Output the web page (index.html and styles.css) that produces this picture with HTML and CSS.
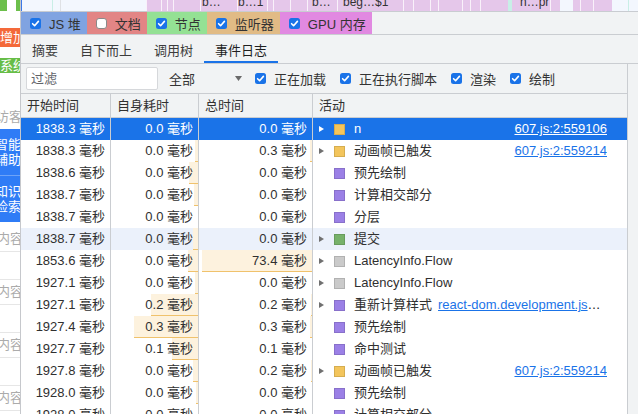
FILE: index.html
```html
<!DOCTYPE html>
<html lang="zh-CN">
<head>
<meta charset="utf-8">
<title>事件日志</title>
<link rel="stylesheet" href="styles.css">
</head>
<body>
<div class="app">
  <aside class="page-strip">
    <div class="ps-top"><span class="g1"></span><span class="w"></span><span class="g2"></span></div>
    <div class="ps-tag orange">增加</div>
    <div class="ps-tag green">系统</div>
    <div class="ps-visitor">访客</div>
    <div class="ps-blue">
      <div class="ps-blue-item first">智能<br>辅助</div>
      <div class="ps-blue-item">知识<br>检索</div>
    </div>
    <div class="ps-card first">内容</div>
    <div class="ps-card">内容</div>
    <div class="ps-card">内容</div>
    <div class="ps-card">内容</div>
  </aside>

  <main class="devtools">
    <div class="flame">
      <div class="fl-line sel" style="left:0"></div>
      <div class="fl-line cyan" style="left:31px"></div>
      <div class="fl-line gray" style="left:39px"></div>
      <div class="fl-block purple" style="left:125px;width:466px"></div>
      <div class="fl-line white" style="left:125px"></div>
      <div class="fl-line white" style="left:140px"></div>
      <div class="fl-line white" style="left:146px"></div>
      <div class="fl-line white" style="left:152px"></div>
      <div class="fl-line white" style="left:179px"></div>
      <div class="fl-line white" style="left:216px"></div>
      <div class="fl-line white" style="left:246px"></div>
      <div class="fl-line white" style="left:252px"></div>
      <div class="fl-line white" style="left:269px"></div>
      <div class="fl-line white" style="left:286px"></div>
      <div class="fl-line white" style="left:316px"></div>
      <div class="fl-line white" style="left:382px"></div>
      <div class="fl-line white" style="left:392px"></div>
      <div class="fl-line white" style="left:409px"></div>
      <div class="fl-line white" style="left:417px"></div>
      <div class="fl-line white" style="left:441px"></div>
      <div class="fl-line white" style="left:449px"></div>
      <div class="fl-line white" style="left:459px"></div>
      <div class="fl-block cyan" style="left:487px;width:4px"></div>
      <div class="fl-line white" style="left:529px"></div>
      <div class="fl-block pale" style="left:539px;width:13px"></div>
      <div class="fl-line white" style="left:559px"></div>
      <div class="fl-line white" style="left:572px"></div>
      <div class="fl-line cyan" style="left:607px"></div>
      <span class="fl-label" style="left:181px">b…</span>
      <span class="fl-label" style="left:217px">b…1</span>
      <span class="fl-label" style="left:291px">b…</span>
      <span class="fl-label" style="left:322px">beg…$1</span>
      <span class="fl-label" style="left:499px">n…pr</span>
    </div>

    <div class="legend">
      <label class="lg js"><svg class="cb" viewBox="0 0 11 11"><rect width="11" height="11" rx="2.5" fill="#1a73e8"/><path d="M2.6 5.7 L4.6 7.7 L8.4 3.4" stroke="#fff" stroke-width="1.6" fill="none" stroke-linecap="round" stroke-linejoin="round"/></svg>JS 堆</label>
      <label class="lg doc"><svg class="cb" viewBox="0 0 11 11"><rect x="0.5" y="0.5" width="10" height="10" rx="2.5" fill="#fff" stroke="#8a8a8a"/></svg>文档</label>
      <label class="lg node"><svg class="cb" viewBox="0 0 11 11"><rect width="11" height="11" rx="2.5" fill="#1a73e8"/><path d="M2.6 5.7 L4.6 7.7 L8.4 3.4" stroke="#fff" stroke-width="1.6" fill="none" stroke-linecap="round" stroke-linejoin="round"/></svg>节点</label>
      <label class="lg listen"><svg class="cb" viewBox="0 0 11 11"><rect width="11" height="11" rx="2.5" fill="#1a73e8"/><path d="M2.6 5.7 L4.6 7.7 L8.4 3.4" stroke="#fff" stroke-width="1.6" fill="none" stroke-linecap="round" stroke-linejoin="round"/></svg>监听器</label>
      <label class="lg gpu"><svg class="cb" viewBox="0 0 11 11"><rect width="11" height="11" rx="2.5" fill="#1a73e8"/><path d="M2.6 5.7 L4.6 7.7 L8.4 3.4" stroke="#fff" stroke-width="1.6" fill="none" stroke-linecap="round" stroke-linejoin="round"/></svg>GPU 内存</label>
    </div>

    <nav class="tabs">
      <div class="tab">摘要</div>
      <div class="tab">自下而上</div>
      <div class="tab">调用树</div>
      <div class="tab active">事件日志</div>
    </nav>

    <div class="content">
      <div class="main">
        <div class="filter">
          <input class="filter-input" type="text" placeholder="过滤">
          <div class="select"><span>全部</span><svg class="arrow" viewBox="0 0 7 5"><path d="M0 0 H7 L3.5 5 Z" fill="#6a6a6a"/></svg></div>
          <label class="fcb"><svg class="cb" viewBox="0 0 11 11"><rect width="11" height="11" rx="2.5" fill="#1a73e8"/><path d="M2.6 5.7 L4.6 7.7 L8.4 3.4" stroke="#fff" stroke-width="1.6" fill="none" stroke-linecap="round" stroke-linejoin="round"/></svg>正在加载</label>
          <label class="fcb"><svg class="cb" viewBox="0 0 11 11"><rect width="11" height="11" rx="2.5" fill="#1a73e8"/><path d="M2.6 5.7 L4.6 7.7 L8.4 3.4" stroke="#fff" stroke-width="1.6" fill="none" stroke-linecap="round" stroke-linejoin="round"/></svg>正在执行脚本</label>
          <label class="fcb"><svg class="cb" viewBox="0 0 11 11"><rect width="11" height="11" rx="2.5" fill="#1a73e8"/><path d="M2.6 5.7 L4.6 7.7 L8.4 3.4" stroke="#fff" stroke-width="1.6" fill="none" stroke-linecap="round" stroke-linejoin="round"/></svg>渲染</label>
          <label class="fcb"><svg class="cb" viewBox="0 0 11 11"><rect width="11" height="11" rx="2.5" fill="#1a73e8"/><path d="M2.6 5.7 L4.6 7.7 L8.4 3.4" stroke="#fff" stroke-width="1.6" fill="none" stroke-linecap="round" stroke-linejoin="round"/></svg>绘制</label>
        </div>

        <div class="table">
          <div class="thead">
            <div class="hcell">开始时间</div>
            <div class="hcell">自身耗时</div>
            <div class="hcell">总时间</div>
            <div class="hcell last">活动</div>
          </div>

          <div class="row sel">
            <div class="cell num"><span>1838.3 毫秒</span></div>
            <div class="cell num"><span>0.0 毫秒</span></div>
            <div class="cell num"><span>0.0 毫秒</span></div>
            <div class="cell act"><i class="tri"></i><i class="sq yellow"></i><span class="name">n</span><span class="src"><a>607.js:2:559106</a></span></div>
          </div>
          <div class="row">
            <div class="cell num"><span>1838.3 毫秒</span></div>
            <div class="cell num"><b class="bar" style="width:3px"></b><span>0.0 毫秒</span></div>
            <div class="cell num"><b class="bar" style="width:2px"></b><span>0.3 毫秒</span></div>
            <div class="cell act"><i class="tri"></i><i class="sq yellow"></i><span class="name">动画帧已触发</span><span class="src"><a>607.js:2:559214</a></span></div>
          </div>
          <div class="row">
            <div class="cell num"><span>1838.6 毫秒</span></div>
            <div class="cell num"><b class="bar" style="width:9px"></b><span>0.0 毫秒</span></div>
            <div class="cell num"><span>0.0 毫秒</span></div>
            <div class="cell act"><i class="tri none"></i><i class="sq purple"></i><span class="name">预先绘制</span></div>
          </div>
          <div class="row">
            <div class="cell num"><span>1838.7 毫秒</span></div>
            <div class="cell num"><b class="bar" style="width:4px"></b><span>0.0 毫秒</span></div>
            <div class="cell num"><span>0.0 毫秒</span></div>
            <div class="cell act"><i class="tri none"></i><i class="sq purple"></i><span class="name">计算相交部分</span></div>
          </div>
          <div class="row">
            <div class="cell num"><span>1838.7 毫秒</span></div>
            <div class="cell num"><span>0.0 毫秒</span></div>
            <div class="cell num"><span>0.0 毫秒</span></div>
            <div class="cell act"><i class="tri none"></i><i class="sq purple"></i><span class="name">分层</span></div>
          </div>
          <div class="row hover">
            <div class="cell num"><span>1838.7 毫秒</span></div>
            <div class="cell num"><b class="bar" style="width:5px"></b><span>0.0 毫秒</span></div>
            <div class="cell num"><span>0.0 毫秒</span></div>
            <div class="cell act"><i class="tri"></i><i class="sq green"></i><span class="name">提交</span></div>
          </div>
          <div class="row">
            <div class="cell num"><span>1853.6 毫秒</span></div>
            <div class="cell num"><b class="bar" style="width:10px"></b><span>0.0 毫秒</span></div>
            <div class="cell num"><b class="bar" style="width:110px"></b><span>73.4 毫秒</span></div>
            <div class="cell act"><i class="tri"></i><i class="sq gray"></i><span class="name">LatencyInfo.Flow</span></div>
          </div>
          <div class="row">
            <div class="cell num"><span>1927.1 毫秒</span></div>
            <div class="cell num"><b class="bar" style="width:3px"></b><span>0.0 毫秒</span></div>
            <div class="cell num"><span>0.0 毫秒</span></div>
            <div class="cell act"><i class="tri"></i><i class="sq gray"></i><span class="name">LatencyInfo.Flow</span></div>
          </div>
          <div class="row">
            <div class="cell num"><span>1927.1 毫秒</span></div>
            <div class="cell num"><b class="bar" style="width:47px"></b><span>0.2 毫秒</span></div>
            <div class="cell num"><b class="bar" style="width:1px"></b><span>0.2 毫秒</span></div>
            <div class="cell act"><i class="tri"></i><i class="sq purple"></i><span class="name">重新计算样式</span><span class="src long"><a>react-dom.development.js</a>…</span></div>
          </div>
          <div class="row">
            <div class="cell num"><span>1927.4 毫秒</span></div>
            <div class="cell num"><b class="bar" style="width:64px"></b><span>0.3 毫秒</span></div>
            <div class="cell num"><b class="bar" style="width:2px"></b><span>0.3 毫秒</span></div>
            <div class="cell act"><i class="tri none"></i><i class="sq purple"></i><span class="name">预先绘制</span></div>
          </div>
          <div class="row">
            <div class="cell num"><span>1927.7 毫秒</span></div>
            <div class="cell num"><b class="bar" style="width:26px"></b><span>0.1 毫秒</span></div>
            <div class="cell num"><span>0.1 毫秒</span></div>
            <div class="cell act"><i class="tri none"></i><i class="sq purple"></i><span class="name">命中测试</span></div>
          </div>
          <div class="row">
            <div class="cell num"><span>1927.8 毫秒</span></div>
            <div class="cell num"><b class="bar" style="width:5px"></b><span>0.0 毫秒</span></div>
            <div class="cell num"><b class="bar" style="width:1px"></b><span>0.2 毫秒</span></div>
            <div class="cell act"><i class="tri"></i><i class="sq yellow"></i><span class="name">动画帧已触发</span><span class="src"><a>607.js:2:559214</a></span></div>
          </div>
          <div class="row">
            <div class="cell num"><span>1928.0 毫秒</span></div>
            <div class="cell num"><b class="bar" style="width:2px"></b><span>0.0 毫秒</span></div>
            <div class="cell num"><span>0.0 毫秒</span></div>
            <div class="cell act"><i class="tri none"></i><i class="sq purple"></i><span class="name">预先绘制</span></div>
          </div>
          <div class="row">
            <div class="cell num"><span>1928.0 毫秒</span></div>
            <div class="cell num"><span>0.0 毫秒</span></div>
            <div class="cell num"><span>0.0 毫秒</span></div>
            <div class="cell act"><i class="tri none"></i><i class="sq purple"></i><span class="name">计算相交部分</span></div>
          </div>
        </div>
      </div>
      <div class="gutter"></div>
    </div>
  </main>
</div>
</body>
</html>
```

FILE: styles.css
```css
* { box-sizing: border-box; }
html, body { margin: 0; padding: 0; }
body {
  width: 638px;
  height: 414px;
  overflow: hidden;
  background: #fff;
  color: #303030;
  font-family: "Liberation Sans", "Noto Sans CJK SC", sans-serif;
  font-size: 13px;
}
.app { display: flex; height: 414px; }

/* ---------- underlying page strip ---------- */
.page-strip {
  width: 21px;
  flex: none;
  border-right: 1px solid #c6c8cc;
  overflow: hidden;
  white-space: nowrap;
  display: flex;
  flex-direction: column;
  background: #fff;
  line-height: 14px;
}
.ps-top { height: 11px; display: flex; flex: none; }
.ps-top .g1 { width: 7px; background: #6cbf4b; }
.ps-top .w { width: 9px; }
.ps-top .g2 { width: 4px; background: #6cbf4b; }
.ps-tag { color: #fff; flex: none; }
.ps-tag.orange { margin-top: 17px; height: 19px; line-height: 19px; background: #f4693a; }
.ps-tag.green { margin-top: 11px; height: 15px; line-height: 15px; background: #67bd47; }
.ps-visitor { margin-top: 35px; height: 18px; line-height: 18px; color: #ababab; margin-left: -4px; flex: none; }
.ps-blue { margin-top: 3px; height: 93px; background: #2f7cf6; color: #fff; flex: none; display: flex; flex-direction: column; }
.ps-blue-item { flex: 1; display: flex; align-items: center; margin-left: -5px; line-height: 15px; }
.ps-blue-item.first { border-bottom: 1px solid #6da3f8; }
.ps-card {
  flex: none;
  margin-top: 27px;
  height: 26px;
  line-height: 24px;
  color: #ababab;
  margin-left: -3px;
  border-top: 1px solid #e6e6e6;
  border-bottom: 1px solid #e6e6e6;
}
.ps-card.first { margin-top: 4px; border-top-color: transparent; }

/* ---------- devtools panel ---------- */
.devtools {
  flex: 1;
  min-width: 0;
  display: flex;
  flex-direction: column;
  background: #f1f3f4;
}

.flame {
  position: relative;
  flex: none;
  height: 12px;
  background: #f3f7fe;
  border-bottom: 1px solid #c9ccd1;
  overflow: hidden;
}
.fl-line { position: absolute; top: 0; bottom: 0; width: 1px; }
.fl-line.sel { background: #3b78e7; }
.fl-line.cyan { background: #c9eee6; }
.fl-line.gray { background: #dfe1e5; }
.fl-line.white { background: rgba(255, 255, 255, 0.75); }
.fl-block { position: absolute; top: 0; bottom: 0; }
.fl-block.purple { background: #e5c7ea; }
.fl-block.cyan { background: #c8efe7; }
.fl-block.pale { background: #f3f7fe; }
.fl-label {
  position: absolute;
  top: -4px;
  font-size: 12px;
  line-height: 12px;
  color: #333;
  white-space: nowrap;
}

.legend {
  flex: none;
  display: flex;
  height: 23px;
  border-bottom: 1px solid #cacdd1;
}
.lg {
  display: flex;
  align-items: center;
  gap: 8px;
  padding: 0 6px 0 9px;
  color: #333;
  white-space: nowrap;
}
.lg.js { background: #80a3e1; }
.lg.doc { background: #e28585; }
.lg.node { background: #94e194; }
.lg.listen { background: #e1bb85; }
.lg.gpu { background: #e189e1; }
.cb { width: 11px; height: 11px; flex: none; display: block; }

.tabs {
  flex: none;
  display: flex;
  height: 29px;
  border-bottom: 1px solid #cacdd1;
}
.tab {
  display: flex;
  align-items: center;
  padding: 0 11px;
  color: #3c3c3c;
}
.tab.active {
  color: #1f1f1f;
  box-shadow: inset 0 -2px 0 #1a73e8;
}

.content { flex: 1; min-height: 0; display: flex; }
.main { flex: 1; min-width: 0; display: flex; flex-direction: column; }
.gutter { flex: none; width: 11px; border-left: 1px solid #cacdd1; background: #f1f3f4; }

.filter {
  flex: none;
  height: 30px;
  display: flex;
  align-items: center;
  border-bottom: 1px solid #cacdd1;
}
.filter-input {
  margin: 0 0 0 5px;
  width: 132px;
  height: 23px;
  border: 1px solid #d6d8db;
  border-radius: 2px;
  background: #fff;
  padding: 0 4px;
  font: inherit;
  color: #333;
  outline: none;
}
.filter-input::placeholder { color: #5f6368; }
.select {
  margin-left: 4px;
  width: 84px;
  display: flex;
  align-items: center;
  justify-content: space-between;
  padding: 0 4px 0 7px;
  color: #333;
}
.arrow { width: 7px; height: 5px; display: block; }
.fcb {
  display: flex;
  align-items: center;
  gap: 8px;
  margin-left: 14px;
  color: #333;
  white-space: nowrap;
}
.select + .fcb { margin-left: 9px; }

/* ---------- table ---------- */
.table { flex: 1; background: #fff; overflow: hidden; }
.thead, .row {
  display: grid;
  grid-template-columns: 90px 88px 114px 1fr;
}
.thead {
  height: 24px;
  background: #f1f3f4;
  border-bottom: 1px solid #cacdd1;
}
.hcell {
  padding-left: 6px;
  line-height: 23px;
  border-right: 1px solid #cacdd1;
  color: #303030;
  white-space: nowrap;
}
.hcell.last { border-right: none; }
.row { height: 22px; line-height: 22px; }
.cell { border-right: 1px solid #cacdd1; white-space: nowrap; overflow: hidden; }
.num { position: relative; text-align: right; padding-right: 5px; }
.num span { position: relative; }
.bar {
  position: absolute;
  top: 0;
  right: 0;
  bottom: 0;
  background: #fdf2de;
  border-bottom: 1px solid #f0c26c;
}
.act {
  border-right: none;
  display: flex;
  align-items: center;
  padding: 0 20px 0 6px;
}
.tri {
  flex: none;
  width: 0;
  height: 0;
  border-left: 5px solid #707070;
  border-top: 3.5px solid transparent;
  border-bottom: 3.5px solid transparent;
  margin-right: 10px;
}
.tri.none { border-left-color: transparent; }
.sq {
  flex: none;
  width: 11px;
  height: 11px;
  margin-right: 9px;
  border: 1px solid rgba(0, 0, 0, 0.12);
}
.sq.yellow { background: #f3c55c; }
.sq.purple { background: #9b80e6; }
.sq.green { background: #77b26a; }
.sq.gray { background: #cacaca; }
.name { flex: none; }
.src {
  flex: 1 1 auto;
  padding-left: 6px;
  min-width: 0;
  overflow: hidden;
  text-overflow: ellipsis;
  white-space: nowrap;
  text-align: right;
  color: #1a1a1a;
}
.src.long { text-align: left; }
.src a { color: #1a73e8; text-decoration: underline; }

.row.hover { background: #ebf1fb; }
.row.sel { background: #1a73e8; color: #fff; }
.row.sel .tri { border-left-color: #fff; }
.row.sel .src { color: #fff; }
.row.sel .src a { color: #fff; }
.row.sel .bar { display: none; }
```
